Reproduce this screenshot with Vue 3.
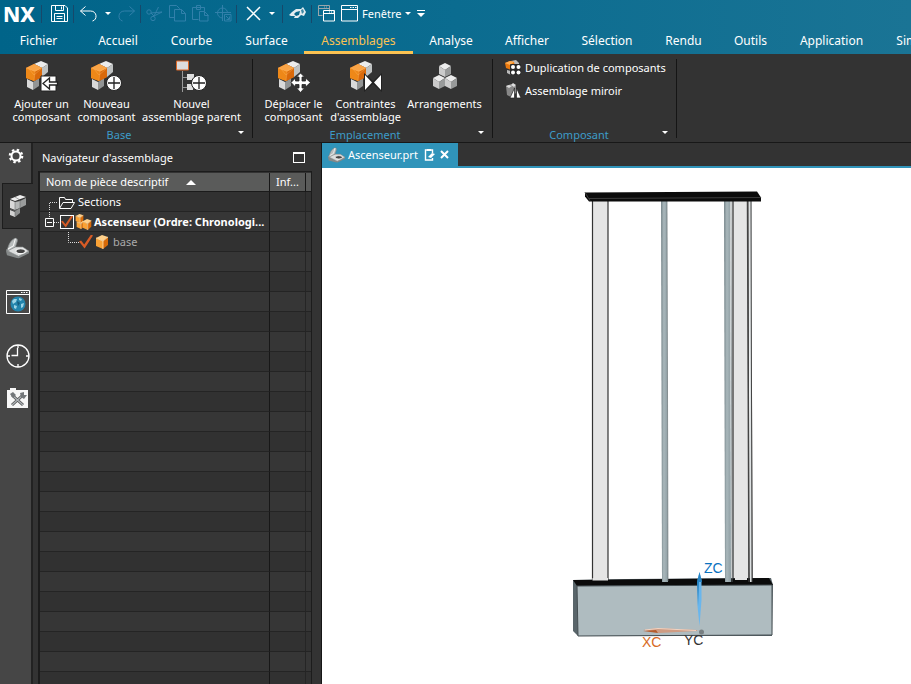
<script setup>
import { ref } from 'vue'

const tabs = ['Fichier', 'Accueil', 'Courbe', 'Surface', 'Assemblages', 'Analyse', 'Afficher', 'Sélection', 'Rendu', 'Outils', 'Application', 'Simulation']
const active = ref('Assemblages')
const rootChecked = ref(true)
const baseChecked = ref(true)
const fillerRows = 22
</script>

<template>
  <div class="app">
    <svg class="defs" aria-hidden="true">
      <defs>
        <linearGradient id="steel" x1="0" y1="0" x2="1" y2="0">
          <stop offset="0" stop-color="#76858a" />
          <stop offset="0.4" stop-color="#a9b7bb" />
          <stop offset="1" stop-color="#8e9da2" />
        </linearGradient>
        <symbol id="cubes" viewBox="0 0 34 34">
          <path d="M2 19l6 3v8l-6-3z" fill="#d9d9d9" />
          <path d="M8 22l6-4v8l-6 4z" fill="#929494" />
          <path d="M9 4l7-3 7 3-6 4z" fill="#ececec" />
          <path d="M9 4l8 4v9l-8-3z" fill="#b5b8b8" />
          <path d="M17 8l6-4v8l-6 5z" fill="#bfc2c2" />
          <path d="M1 8l8-4 8 4v9l-8 4-8-3z" fill="#e8780f" />
          <path d="M1 8l8-4 8 4-7 4z" fill="#f9a447" />
          <path d="M1 8l9 4-1 9-8-3z" fill="#ee8818" />
          <path d="M10 12l7-4v9l-8 4z" fill="#d9690a" />
          <path d="M1 8l8 3 8-3M10 12l-1 9M4 9l5 6 7-6" fill="none" stroke="#ffb866" stroke-width="0.6" opacity="0.6" />
        </symbol>
        <symbol id="greycube" viewBox="0 0 14 14" preserveAspectRatio="none">
          <path d="M0 3l7-3 7 3-7 4z" fill="#ececec" />
          <path d="M0 3l7 4v7l-7-3z" fill="#cbcbcb" />
          <path d="M14 3l-7 4v7l7-3z" fill="#989a9a" />
        </symbol>
        <symbol id="orangecube" viewBox="0 0 14 14" preserveAspectRatio="none">
          <path d="M1 3l6-3 6 2-5 4z" fill="#ffd08a" />
          <path d="M1 3l7 3v8l-7-3z" fill="#f9a236" />
          <path d="M13 2l-5 4v8l5-4z" fill="#d76a08" />
          <path d="M1 3l7 3 5-4M8 6v8" fill="none" stroke="#ffe2b4" stroke-width="0.8" />
        </symbol>
        <symbol id="part" viewBox="0 0 22 20">
          <path d="M0 13l7-4h9l6 4v2l-10 5-11-3z" fill="#858989" />
          <path d="M0 12l7-3h9l6 4-10 5z" fill="#dcdede" stroke="#858989" stroke-width="0.6" />
          <path d="M1 13C2 8 4 3 8 1c2-1 3 0 3 2l-2 6-6 3z" fill="#b9bdbd" stroke="#7f8383" stroke-width="0.7" />
          <ellipse cx="14" cy="13" rx="4.500" ry="2.200" fill="#444" stroke="#f6f6f6" />
          <path d="M9 1L7 8l-5 3" fill="none" stroke="#f6f6f6" />
        </symbol>
        <symbol id="plus" viewBox="0 0 16 16">
          <circle cx="8" cy="8" r="7.500" fill="#fff" stroke="#222" />
          <path d="M8 2v12M2 8h12" stroke="#222" stroke-width="1.300" />
        </symbol>
      </defs>
    </svg>

    <header class="top">
      <div class="quick">
        <div class="logo">NX</div>
        <div class="qg save">
          <button aria-label="Enregistrer"><svg width="17" height="17" viewBox="0 0 17 17" class="ln"><path d="M.500.500h13.500l2.500 2.500v13.500h-16v-16zM4.500.500v5h8v-5M10.500 1.500v3M3.500 16.500v-8h10v8M5.500 11.500h6M5.500 13.500h6" /></svg></button>
        </div>
        <div class="qg undo">
          <button aria-label="Annuler"><svg width="17" height="16" viewBox="0 0 17 16" class="ln"><path d="M5.500.500l-5 4.500 5 4.500M.500 5h10c7 0 7 9 2 10" /></svg></button>
          <button class="cw" aria-label="Historique"><i class="caret"></i></button>
          <button aria-label="Rétablir"><svg width="17" height="16" viewBox="0 0 17 16" class="ln off"><path d="M11.500.500l5 4.500-5 4.500M16.500 5h-10c-7 0-7 9-2 10" /></svg></button>
        </div>
        <div class="qg clip">
          <button aria-label="Couper"><svg width="17" height="16" viewBox="0 0 17 16" class="ln off"><circle cx="3" cy="6" r="2.200" /><circle cx="7" cy="12.500" r="2.200" /><path d="M5 7l11-1M8 10L12.500 1M5 7l3 3 8-4" /></svg></button>
          <button aria-label="Copier"><svg width="17" height="17" viewBox="0 0 17 17" class="ln off"><path d="M5.500 12.500h-5V.500h7l3 3v1M5.500 4.500h7l4 4v7.500h-11zM12.500 4.500v4h4" /></svg></button>
          <button aria-label="Coller"><svg width="17" height="17" viewBox="0 0 17 17" class="ln off"><path d="M6.500 14.500h-6v-12h12v4M4.500.500h4v4h-4zM7.500 6.500h5l3.500 3.500v6h-8.500zM12.500 6.500v4h4" /></svg></button>
          <button aria-label="Coller spécial"><svg width="17" height="17" viewBox="0 0 17 17" class="ln off"><path d="M12.500 8a5 5 0 1 0-5 5M7.500 0v16M0 7.500h16M9.500 9.500h6.500v6.500h-6.500zM11 11l3 3M11.500 14.500h3v-3" /></svg></button>
        </div>
        <div class="qg del">
          <button aria-label="Supprimer"><svg width="15" height="15" viewBox="0 0 15 15" class="ln"><path d="M1 1l13 13M14 1L1 14" stroke-width="1.500" /></svg></button>
          <button class="cw" aria-label="Options de suppression"><i class="caret"></i></button>
        </div>
        <div class="qg touch">
          <button aria-label="Mode tactile"><svg width="17" height="13" viewBox="0 0 17 13"><path d="M0 8l3-3 4-3 5 0 2-2 3 5-2 4-3-1-3 3H5l1-2H2z" fill="#e4edf0" /><path d="M7 5l4-1-1 4-3 1-2-2z" fill="#08688b" /><path d="M12 3l2-1 1 3-2 2z" fill="#3d88a4" /></svg></button>
        </div>
        <div class="qg win">
          <button aria-label="Changer de fenêtre"><svg width="17" height="17" viewBox="0 0 17 17" fill="none"><path d="M.500 11V.500h11V5M.500 3.500h11M.500 10.500h4M6 2h1m1 0h1" stroke="#9aa6aa" /><path d="M5.500 5.500h11v10.500h-11zM5.500 8.500h11" stroke="#fff" /><path d="M11 7h1m1 0h1m1 0h1" stroke="#fff" /></svg></button>
          <button class="fen"><svg width="17" height="17" viewBox="0 0 17 17" class="ln"><path d="M.500.500h16v15.500h-16zM.500 4.500h16M9 2.500h1.500m1 0h1.500m1 0h1.500" /></svg><span>Fenêtre</span><i class="caret"></i></button>
          <button aria-label="Personnaliser"><svg width="8" height="8" viewBox="0 0 8 8"><path d="M0 0h8v1H0zM0 3h8L4 7z" fill="#fff" /></svg></button>
        </div>
      </div>
      <nav class="tabs">
        <button v-for="t in tabs" :key="t" :class="{ on: t === active }" @click="active = t">{{ t }}</button>
      </nav>
    </header>

    <section class="ribbon">
      <div class="group g1">
        <div class="big">
          <button><svg width="34" height="34" viewBox="0 0 34 34"><use href="#cubes" width="34" height="34" /><path d="M16 16h15v15H16z" fill="#fff" stroke="#222" /><path d="M32.500 22h-8v-4l-6.500 5.500 6.500 5.500v-4h8z" fill="#fff" stroke="#222" stroke-width="1.300" /></svg><span>Ajouter un<br />composant</span></button>
          <button><svg width="34" height="34" viewBox="0 0 34 34"><use href="#cubes" width="34" height="34" /><use href="#plus" x="16" y="15" width="16" height="16" /></svg><span>Nouveau<br />composant</span></button>
          <button><svg width="34" height="34" viewBox="0 0 34 34"><path d="M7.500 11v21M8 17.500h5M8 27.500h5" stroke="#999" fill="none" /><path d="M1.500 1h12v9h-12z" fill="#ddd" stroke="#db6726" /><path d="M12 14h7v6h-7zM12 24h6v6h-6z" fill="#ddd" /><use href="#plus" x="16" y="15" width="16" height="16" /></svg><span>Nouvel<br />assemblage parent</span></button>
        </div>
        <footer><span>Base</span><button aria-label="Options Base"><i class="caret"></i></button></footer>
      </div>
      <div class="group g2">
        <div class="big">
          <button><svg width="34" height="34" viewBox="0 0 34 34"><use href="#cubes" width="34" height="34" /><path d="M23.500 13l4 4h-2.500v4h3.500V18l5 4.500-5 4.500v-2.500H25V28h2.500l-4 4.500-4-4.500H22v-3.500h-3.500V27L14 22.500l4.500-4.500v3H22V17h-2.500z" fill="#fff" stroke="#222" stroke-width="0.800" /></svg><span>Déplacer le<br />composant</span></button>
          <button><svg width="34" height="34" viewBox="0 0 34 34"><use href="#cubes" width="34" height="34" /><path d="M15 13v19l9-8 9 8V13l-9 8z" fill="#222" /><path d="M16 15v15l7-7.500zM32 15v15l-7-7.500z" fill="#fff" /></svg><span>Contraintes<br />d'assemblage</span></button>
          <button><svg width="34" height="34" viewBox="0 0 34 34"><use href="#greycube" x="11" y="3" width="12" height="14" /><use href="#greycube" x="5" y="15" width="12" height="14" /><use href="#greycube" x="17" y="15" width="12" height="14" /></svg><span>Arrangements</span></button>
        </div>
        <footer><span>Emplacement</span><button aria-label="Options Emplacement"><i class="caret"></i></button></footer>
      </div>
      <div class="group g3">
        <div class="small">
          <button><svg width="16" height="16" viewBox="0 0 16 16"><path d="M6 1l5-1 3 3v4H6z" fill="#bbb" /><path d="M0 3l5-2 4 1 1 4-4 4-5-2z" fill="#e9790f" /><path d="M0 3l5-2 4 1-4 3z" fill="#ffad51" /><path d="M2 10l4 1v4l-4-2z" fill="#bbb" /><rect x="5" y="4" width="11" height="11" rx="1" fill="#292929" /><g fill="#fff"><circle cx="8" cy="7" r="2" /><circle cx="13.500" cy="7" r="2" /><circle cx="8" cy="12.500" r="2" /><circle cx="13.500" cy="12.500" r="2" /></g></svg><span>Duplication de composants</span></button>
          <button><svg width="16" height="16" viewBox="0 0 16 16"><path d="M1 3l5-2 5 2v7l-5 4-4-2z" fill="#888" /><path d="M1 3l3-1 3 1-3 2zM6 2l2-2 3 2-2 2z" fill="#ddd" /><path d="M5 15L9.500 5v10zM16 15L11.500 5v10z" fill="#fff" stroke="#222" stroke-width="0.700" /></svg><span>Assemblage miroir</span></button>
        </div>
        <footer><span>Composant</span><button aria-label="Options Composant"><i class="caret"></i></button></footer>
      </div>
    </section>

    <main class="work">
      <nav class="rail">
        <button class="gear" aria-label="Paramètres"><svg width="16" height="16" viewBox="0 0 16 16"><g fill="none" stroke="#fff"><circle cx="8" cy="8" r="4.500" stroke-width="2" /><circle cx="8" cy="8" r="6.200" stroke-width="2.200" stroke-dasharray="2.400 2.470" /></g></svg></button>
        <button class="sel" aria-label="Navigateur d'assemblage"><svg width="18" height="22" viewBox="0 0 18 22"><path d="M1 15l5 2v5l-5-2z" fill="#d2d2d2" /><path d="M6 16l5-3v5l-5 4z" fill="#8f9191" /><path d="M1 5l5 2v8l-5-2z" fill="#d9d9d9" /><path d="M6 7l5-1v7l-5 2z" fill="#b5b7b7" /><path d="M11 6l6-3v7l-6 3z" fill="#9a9c9c" /><path d="M1 4l10-4 6 2-11 4z" fill="#efefef" /><path d="M6 2l5 3v8M1 14l5 2 5-3M6 7v14" fill="none" stroke="#6d6f6f" stroke-width="0.600" /></svg></button>
        <button class="r3" aria-label="Navigateur de pièce"><svg width="23" height="22" viewBox="0 0 22 20"><use href="#part" width="22" height="20" /></svg></button>
        <button class="r4" aria-label="Navigateur Web"><svg width="24" height="24" viewBox="0 0 24 24"><path d="M.500.500h23v23H.500zM.500 4.500h23" fill="#484848" stroke="#fff" /><path d="M15 2.500h1.500m1 0h1.500m1 0h1.500" stroke="#fff" /><circle cx="12" cy="14" r="7.500" fill="#2384ac" /><path d="M6 11l2-2 3 0-1 3-3 2zM13 8l3 1-1 2-2-1zM8 15l3 1-1 3-2-1zM15 14l3-1-1 4-2 1z" fill="#9bd3e6" /><path d="M11 11l3 2-2 3z" fill="#135b7d" /></svg></button>
        <button class="r5" aria-label="Historique"><svg width="24" height="24" viewBox="0 0 24 24" class="ln"><circle cx="12" cy="12" r="11" stroke-width="1.300" /><path d="M12 1v3M12 20v3M1 12h3M20 12h3M11.500 4v7.500h-6" stroke-width="1.300" /></svg></button>
        <button class="r6" aria-label="Rôles"><svg width="21" height="22" viewBox="0 0 21 22"><path d="M0 3h3V1h6v2h12v18H0z" fill="#f7f7f7" /><path d="M5 8l11 10M16 8L5 18" stroke="#555" stroke-width="3" /><path d="M5 8l11 10M16 8L5 18" stroke="#aeb4b8" stroke-width="1.200" /><path d="M3 7l3-2 3 3-3 3zM13 6l4-1v3h3l-3 4-3-2z" fill="#73777a" /></svg></button>
      </nav>

      <aside class="panel">
        <div class="ptitle"><h1>Navigateur d'assemblage</h1><button aria-label="Agrandir" class="max"></button></div>
        <div class="frame">
          <table>
            <colgroup><col /><col class="c2" /><col class="c3" /></colgroup>
            <thead>
              <tr><th>Nom de pièce descriptif<svg width="10" height="5" viewBox="0 0 10 5"><path d="M0 5l5-5 5 5z" fill="#fff" /></svg></th><th>Inf...</th><th></th></tr>
            </thead>
            <tbody>
              <tr>
                <td><div class="node"><svg width="38" height="20" viewBox="0 0 38 20"><path d="M9.500 20V10.500h8" class="dots" /><path d="M19.500 16V5.500h5l1 2h7v2.500M19.500 16.500L23 10.500h11.500L31 16.500z" fill="none" stroke="#fff" /></svg><span>Sections</span></div></td><td></td><td></td>
              </tr>
              <tr>
                <td><div class="node"><svg width="20" height="20" viewBox="0 0 20 20"><path d="M9.500 0v5M14 10.500h6" class="dots" /><path d="M5.500 6.500h8v8h-8zM7 10.500h5" fill="none" stroke="#fff" /></svg><input v-model="rootChecked" type="checkbox" class="box" aria-label="Ascenseur" /><svg class="asm" width="17" height="17" viewBox="0 0 17 17"><use href="#orangecube" x="1" y="7" width="9" height="9" /><use href="#orangecube" x="0" y="1" width="9" height="9" /><use href="#orangecube" x="7" y="6" width="10" height="11" /></svg><strong>Ascenseur (Ordre: Chronologi...</strong></div></td><td></td><td></td>
              </tr>
              <tr>
                <td><div class="node"><svg width="39" height="20" viewBox="0 0 39 20"><path d="M28.500 0v10.500h10.500" class="dots" /></svg><input v-model="baseChecked" type="checkbox" class="free" aria-label="base" /><svg class="cube" width="14" height="14" viewBox="0 0 14 14"><use href="#orangecube" width="14" height="14" /></svg><span class="dim">base</span></div></td><td></td><td></td>
              </tr>
              <tr v-for="n in fillerRows" :key="n"><td></td><td></td><td></td></tr>
            </tbody>
          </table>
        </div>
      </aside>

      <section class="view">
        <div class="docs">
          <div class="doc">
            <svg width="17" height="16" viewBox="0 0 22 20"><use href="#part" width="22" height="20" /></svg>
            <span>Ascenseur.prt</span>
            <svg width="11" height="12" viewBox="0 0 11 12"><path d="M8.500 4V1h-7v10h7V9" fill="none" stroke="#fff" stroke-width="1.400" /><path d="M3 0h4v2H3zM4 8l4-4 3 1-4 4z" fill="#fff" /></svg>
            <button aria-label="Fermer"><svg width="9" height="9" viewBox="0 0 9 9"><path d="M1 1l7 7M8 1L1 8" stroke="#fff" stroke-width="2" /></svg></button>
          </div>
        </div>
        <div class="canvas">
          <svg viewBox="322 168 589 516" role="img" aria-label="Ascenseur">
            <path d="M592 200h16v380h-16z" fill="#e5e5e5" />
            <path d="M592.500 200v380M608 200v380" stroke="#333" stroke-width="1.200" />
            <path d="M734 200h14v381h-14z" fill="#e5e5e5" />
            <path d="M733 200v381" stroke="#777" stroke-width="2" />
            <path d="M747.500 200l1.500 381M750.500 200l1.500 382" stroke="#444" stroke-width="1.500" fill="none" />
            <path d="M573 580l54-1 144-1 2 7-1 51-194 0-5-5z" fill="#59656a" />
            <path d="M573 580l196-2 4 7-196 1z" fill="#0b0b0b" />
            <path d="M577 586l195-1v50l-194 1z" fill="#afbcc0" stroke="#454e52" />
            <path d="M592.500 578h15.500v2.500h-15.500zM735 577h12v3h-12z" fill="#e5e5e5" />
            <path d="M661 201h6l1 381h-6z" fill="url(#steel)" />
            <path d="M724 201h6l1 381h-6z" fill="url(#steel)" />
            <path d="M667 201l1 380M731 201l1 381" stroke="#697376" stroke-width="0.700" />
            <path d="M749 201h3v381h-2z" fill="#dde1e2" />
            <path d="M748 201l1 381M751 201l1 381" stroke="#444" fill="none" />
            <path d="M585 192.500l172-1 4 6v4l-172 0-4-5z" fill="#0b0b0b" />
            <path d="M589 198.500l172-1M585 192.500l5 8" stroke="#3c3c3c" fill="none" />
            <path d="M643 630l14-2 40 2v1l-38 2z" fill="#cf9c83" />
            <path d="M645 630l13-1.500 38 2" fill="none" stroke="#f1d4c3" />
            <path d="M643 631l15 2-2-3z" fill="#b45c2d" />
            <path d="M697.500 580l2-8 2 8 0 20-2 26-2-20z" fill="#69b6ed" />
            <path d="M697 582l2.500-10 2.500 10zM697 582h2l-1 24z" fill="#2584c5" />
            <circle cx="701.500" cy="632" r="2.500" fill="#777f82" />
            <text x="704" y="573" fill="#0b72bf">ZC</text>
            <text x="642" y="647" fill="#d86b24">XC</text>
            <text x="684" y="645" fill="#333">YC</text>
          </svg>
        </div>
      </section>
    </main>
  </div>
</template>

<style>
body { margin: 0; background: #333; overflow: hidden; }
</style>

<style scoped>
* { box-sizing: border-box; }
.app { height: 100vh; display: flex; flex-direction: column; overflow: hidden; font: 12px/16px "Noto Sans", "Open Sans", sans-serif; color: #fff; background: #333; }
.defs { position: absolute; width: 0; height: 0; }
button { font: inherit; color: inherit; background: none; border: 0; padding: 0; margin: 0; display: flex; align-items: center; justify-content: center; white-space: nowrap; cursor: pointer; }
svg { display: block; flex: none; }
.ln { fill: none; stroke: #fff; stroke-width: 1; }
.ln.off { stroke: #3180aa; }
.caret { width: 0; height: 0; border: 3px solid transparent; border-top-color: #fff; border-bottom: 0; }

.top { flex: none; height: 54px; background: linear-gradient(90deg, #006489, #0b6c90 50%, #1a7495); }
.quick { display: flex; height: 27px; align-items: center; }
.logo { width: 41px; padding-left: 3px; font-size: 21px; line-height: 26px; font-weight: 800; }
.qg { display: flex; align-items: center; height: 18px; border-left: 1px solid #17486a; }
.save { width: 32px; padding-left: 9px; }
.undo { width: 67px; padding-left: 6px; }
.cw { width: 21px; }
.clip { width: 96px; padding-left: 5px; gap: 6px; }
.del { width: 46px; padding-left: 9px; }
.touch { width: 29px; padding-left: 6px; }
.win { padding-left: 6px; gap: 6px; font-size: 11px; }
.fen { gap: 4px; }
.tabs { display: grid; grid-template-columns: 82px 72px 75px 75px 109px 76px 76px 84px 69px 65px 97px 93px; height: 27px; overflow: hidden; }
.tabs button { border-bottom: 3px solid transparent; padding-top: 3px; }
.tabs button:first-child { padding-right: 5px; }
.tabs .on { color: #fbc252; border-bottom-color: #fbc252; }

.ribbon { flex: none; display: flex; height: 89px; padding-top: 5px; border-bottom: 1px solid #181818; background: #333; font-size: 11px; }
.group { display: flex; flex-direction: column; height: 79px; border-right: 1px solid #151515; }
.g1 { width: 253px; padding-left: 9px; }
.g2 { width: 240px; padding-left: 8px; }
.g3 { width: 184px; padding-left: 12px; }
.big { display: grid; padding-top: 1px; height: 68px; line-height: 13px; }
.g1 .big { grid-template-columns: 65px 65px 105px; }
.g2 .big { grid-template-columns: 65px 79px 79px; }
.big button { flex-direction: column; justify-content: flex-start; gap: 3px; }
.small { display: flex; flex-direction: column; align-items: flex-start; height: 68px; }
.small button { height: 23px; gap: 4px; padding-bottom: 6px; }
footer { display: flex; height: 11px; align-items: center; justify-content: center; color: #3d9cc9; }
footer span { flex: 1; text-align: center; padding-top: 5px; }
footer button { width: 23px; }

.work { flex: 1; min-height: 0; display: flex; }
.rail { width: 33px; flex: none; display: flex; flex-direction: column; align-items: center; background: #464646; border-right: 2px solid #222; }
.gear { height: 26px; }
.sel { width: 31px; height: 46px; margin: 14px -2px 0 0; align-self: flex-end; background: #333; border: 1px solid #1d1d1d; border-right: 0; padding-right: 1px; }
.r3 { margin-top: 8px; margin-left: 4px; }
.r4 { margin-top: 31px; margin-left: 4px; }
.r5 { margin-top: 30px; margin-left: 4px; }
.r6 { margin-top: 19px; margin-left: 4px; }

.panel { width: 289px; flex: none; padding-left: 5px; background: #333; border-right: 1px solid #161616; display: flex; flex-direction: column; overflow: hidden; font-size: 11px; }
.ptitle { display: flex; height: 28px; flex: none; align-items: center; justify-content: space-between; padding: 1px 16px 0 4px; }
h1 { font-size: 11px; line-height: 16px; font-weight: 400; margin: 0; }
.max { width: 12px; height: 11px; border: 1px solid #fff; border-top-width: 2px; }
.frame { width: 274px; flex: 1; border: 2px solid #1c1c1c; border-width: 1px 1px 0 2px; padding-top: 1px; overflow: hidden; }
table { width: 100%; table-layout: fixed; border-collapse: separate; border-spacing: 0; }
.c2 { width: 36px; }
.c3 { width: 5px; }
th { height: 19px; padding: 0 0 0 6px; text-align: left; font-weight: 400; line-height: 18px; background: #5a5b5a; border-right: 1px solid #171717; border-bottom: 1px solid #1b1b1b; white-space: nowrap; }
th:last-child, td:last-child { border-right: 0; padding: 0; }
th svg { display: inline-block; margin-left: 18px; vertical-align: 1px; }
td { height: 20px; padding: 0; border-right: 1px solid #171717; border-bottom: 1px solid #242424; background: #313131; }
tr:nth-child(even) td { background: #363636; }
td:nth-child(2) { border-right-color: #252525; }
.node { display: flex; align-items: center; height: 19px; overflow: hidden; white-space: nowrap; }
.dots { fill: none; stroke: #ddd; stroke-dasharray: 1 1; }
.dim { color: #aaa; }
input { appearance: none; margin: 0; width: 14px; height: 14px; flex: none; }
input:checked::before { content: ""; display: block; width: 12px; height: 12px; background: #d85b25; clip-path: polygon(0 50%, 15% 43%, 37% 72%, 86% 0, 100% 8%, 40% 100%); }
.box { border: 1px solid #fff; }
.asm { margin: 0 2px 0 1px; }
.free:checked::before { width: 14px; height: 14px; }
.cube { margin: 0 4px 0 2px; }

.view { flex: 1; min-width: 0; display: flex; flex-direction: column; background: #fff; }
.docs { flex: none; height: 25px; background: #333; border-bottom: 2px solid #3094ba; font-size: 11px; }
.doc { display: flex; align-items: center; width: 136px; height: 23px; padding-left: 6px; background: #3094ba; white-space: nowrap; }
.doc span { margin: 0 6px 0 3px; }
.doc button { margin-left: 5px; }
.canvas { flex: 1; min-height: 0; background: #fff; overflow: hidden; }
.canvas svg { width: 100%; height: 100%; }
.canvas text { font: 14px "Liberation Sans", Arial, sans-serif; }
</style>
